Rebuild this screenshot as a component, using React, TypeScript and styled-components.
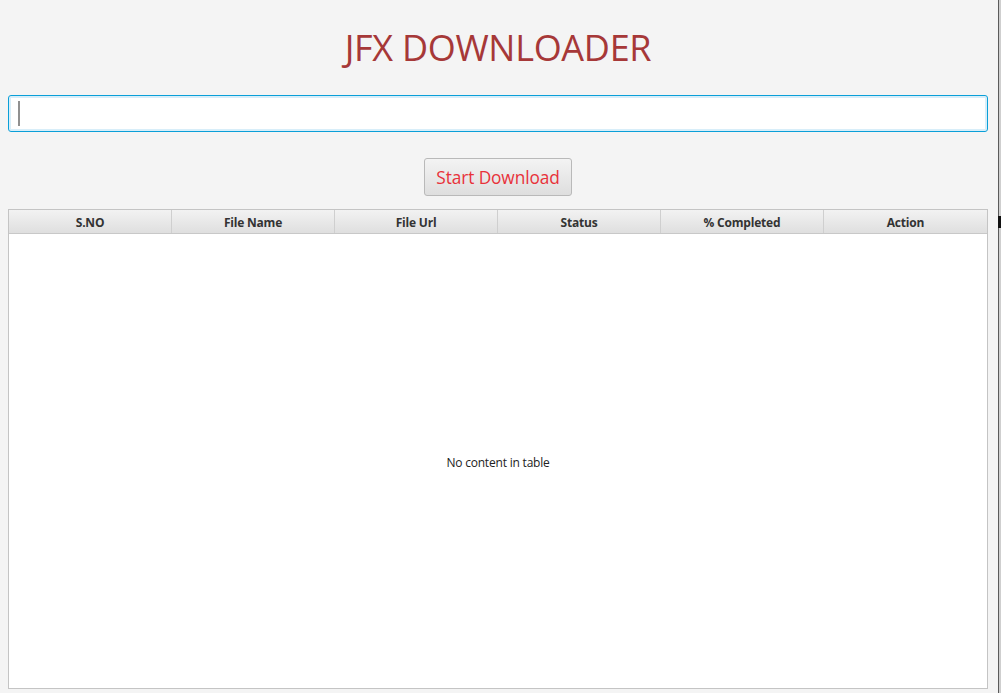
import React from "react";
import styled, { createGlobalStyle } from "styled-components";

const Global = createGlobalStyle`
  html, body { margin: 0; padding: 0; }
  body {
    background: #f4f4f4;
    font-family: "Open Sans", "Noto Sans", "Liberation Sans", sans-serif;
    overflow: hidden;
  }
`;

const Page = styled.div`
  display: flex;
  width: 1001px;
  height: 693px;
  background: #f4f4f4;
`;

const Main = styled.div`
  width: 980px;
  padding: 0 10px 0 8px;
  display: flex;
  flex-direction: column;
  align-items: stretch;
`;

const Edge = styled.div`
  width: 3px;
  display: flex;
  flex-direction: column;
  border-left: 1px solid #5a5a5a;
  background: #cfcfcf;
  box-sizing: border-box;
`;

const EdgeNotch = styled.div`
  margin-top: 216px;
  height: 12px;
  margin-left: -1px;
  background: #111;
`;

const Title = styled.h1`
  margin: 0;
  padding-top: 26px;
  height: 95px;
  box-sizing: border-box;
  text-align: center;
  font-family: "Open Sans", "Noto Sans", sans-serif;
  font-weight: 400;
  font-size: 36px;
  line-height: 44px;
  letter-spacing: -0.3px;
  color: #a63838;
`;

const UrlInput = styled.div`
  height: 37px;
  box-sizing: border-box;
  border: 1px solid #0a9fd8;
  border-radius: 3px;
  background: #fff;
  box-shadow: inset 0 0 0 2px #d8eef9;
  display: flex;
  align-items: center;
  padding-left: 9px;
`;

const Caret = styled.div`
  width: 2px;
  height: 25px;
  background: #909090;
`;

const ButtonRow = styled.div`
  display: flex;
  justify-content: center;
  margin-top: 26px;
`;

const Button = styled.button`
  height: 38px;
  padding: 0 11px;
  border: 1px solid #b9b9b9;
  border-radius: 3px;
  background: linear-gradient(#f3f3f3, #dedede);
  color: #e8323a;
  font-family: "Open Sans", "Noto Sans", sans-serif;
  font-size: 17.3px;
  letter-spacing: -0.1px;
  cursor: pointer;
`;

const Table = styled.div`
  margin-top: 13px;
  height: 480px;
  border: 1px solid #c4c4c4;
  background: #fff;
  display: flex;
  flex-direction: column;
  box-sizing: border-box;
`;

const HeaderRow = styled.div`
  display: grid;
  grid-template-columns: repeat(6, 1fr);
  height: 24px;
  flex: none;
  background: linear-gradient(#f2f2f2, #dfdfdf);
  border-bottom: 1px solid #c8c8c8;
  box-sizing: border-box;
`;

const HeaderCell = styled.div`
  display: flex;
  align-items: center;
  justify-content: center;
  padding-top: 1px;
  font-family: "Open Sans", "Noto Sans", sans-serif;
  font-weight: 700;
  font-size: 12px;
  letter-spacing: -0.2px;
  color: #333;
  border-right: 1px solid #cfcfcf;
  &:last-child { border-right: none; }
`;

const Body = styled.div`
  flex: 1;
  display: flex;
  align-items: center;
  justify-content: center;
  padding-top: 3px;
  font-family: "Open Sans", "Noto Sans", sans-serif;
  font-size: 12px;
  letter-spacing: -0.2px;
  color: #222;
`;

const columns = ["S.NO", "File Name", "File Url", "Status", "% Completed", "Action"];

export default function App() {
  return (
    <>
      <Global />
      <Page>
        <Main>
          <Title>JFX DOWNLOADER</Title>
          <UrlInput>
            <Caret />
          </UrlInput>
          <ButtonRow>
            <Button>Start Download</Button>
          </ButtonRow>
          <Table>
            <HeaderRow>
              {columns.map((c) => (
                <HeaderCell key={c}>{c}</HeaderCell>
              ))}
            </HeaderRow>
            <Body>No content in table</Body>
          </Table>
        </Main>
        <Edge>
          <EdgeNotch />
        </Edge>
      </Page>
    </>
  );
}
